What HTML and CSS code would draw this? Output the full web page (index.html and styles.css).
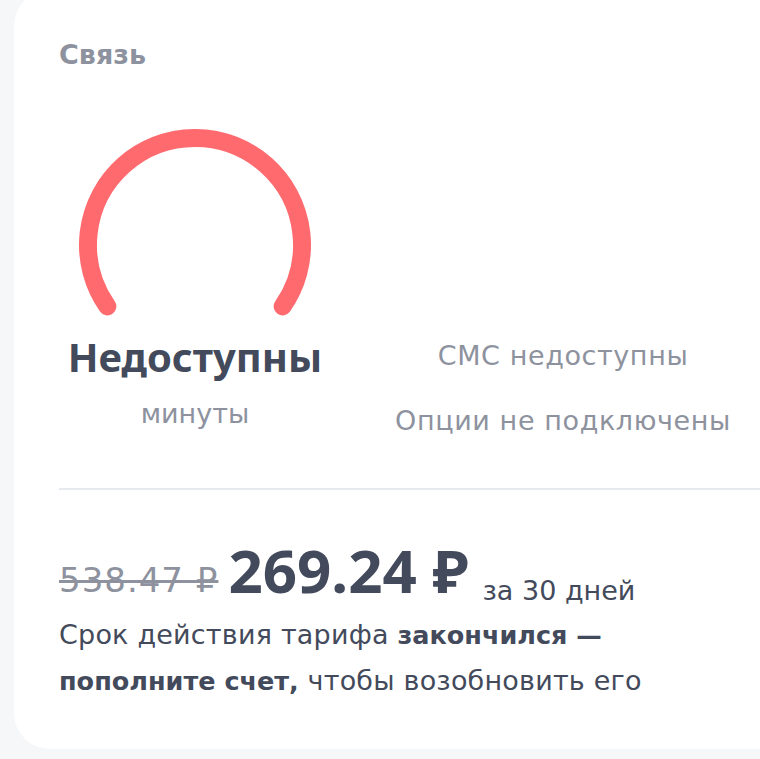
FILE: index.html
```html
<!DOCTYPE html>
<html lang="ru">
<head>
<meta charset="utf-8">
<title>Связь</title>
<link rel="stylesheet" href="styles.css">
</head>
<body>
<section class="card">
  <h2 class="card-title">Связь</h2>
  <div class="stats">
    <div class="stat-main">
      <svg class="gauge" width="234" height="188" viewBox="0 0 234 188" aria-hidden="true">
        <path d="M29.35 177.37 A107 107 0 1 1 204.65 177.37" fill="none" stroke="#ff6a6f" stroke-width="18" stroke-linecap="round"/>
      </svg>
      <div class="stat-value">Недоступны</div>
      <div class="stat-label">минуты</div>
    </div>
    <div class="stat-side">
      <div class="side-item">СМС недоступны</div>
      <div class="side-item">Опции не подключены</div>
    </div>
  </div>
  <hr class="divider">
  <div class="price-row">
    <span class="price-old">538.47 ₽</span>
    <span class="price-new">269.24 ₽</span>
    <span class="price-period">за 30 дней</span>
  </div>
  <p class="note">Срок действия тарифа <b>закончился —</b><br><b>пополните счет,</b> чтобы возобновить его</p>
</section>
</body>
</html>
```
FILE: styles.css
```css
html, body {
  margin: 0;
  padding: 0;
}
body {
  background: #f6f7f9;
  overflow: hidden;
  height: 759px;
  font-family: "DejaVu Sans", sans-serif;
  color: #424a5a;
}
.card {
  box-sizing: border-box;
  width: 820px;
  margin: -10px 0 0 14px;
  padding: 50px 45px 45px;
  background: #ffffff;
  border-radius: 36px;
}
.card-title {
  margin: 0;
  font: 700 27px/30px "DejaVu Sans", sans-serif;
  color: #8d929e;
}
.stats {
  margin-top: 59px;
  display: grid;
  grid-template-columns: 272px 340px;
  column-gap: 62px;
  align-items: end;
}
.stat-main {
  display: flex;
  flex-direction: column;
  align-items: center;
}
.gauge {
  display: block;
}
.stat-value {
  margin-top: 16px;
  font: 700 40px/48px "Noto Sans", sans-serif;
  color: #434a5b;
  white-space: nowrap;
}
.stat-label {
  margin-top: 11px;
  font: 400 27px/44px "DejaVu Sans", sans-serif;
  color: #8d929e;
}
.stat-side {
  display: flex;
  flex-direction: column;
  align-items: center;
  gap: 35px;
}
.side-item {
  font: 400 27px/30px "DejaVu Sans", sans-serif;
  letter-spacing: 0.6px;
  color: #8d929e;
  white-space: nowrap;
}
.divider {
  margin: 52px 0 0;
  border: 0;
  height: 2px;
  background: #e6e9ee;
}
.price-row {
  margin-top: 50px;
  height: 60px;
  display: flex;
  align-items: flex-end;
  white-space: nowrap;
}
.price-old {
  font: 400 34px/40px "DejaVu Sans", sans-serif;
  letter-spacing: 1px;
  color: #8d929e;
  text-decoration: line-through;
  text-decoration-thickness: 3px;
  text-decoration-color: #8d929e;
}
.price-new {
  margin-left: 10px;
  font: 700 60px/60px "Noto Sans", sans-serif;
  color: #434a5b;
}
.price-period {
  margin-left: 14px;
  font: 400 27px/18px "DejaVu Sans", sans-serif;
  color: #434a5b;
}
.note {
  margin: 12px 0 0;
  font: 400 27px/46px "DejaVu Sans", sans-serif;
  letter-spacing: 0.2px;
  color: #434a5b;
  white-space: nowrap;
}
.note b {
  font-weight: 700;
  font-size: 25.5px;
  letter-spacing: 0;
}
```
